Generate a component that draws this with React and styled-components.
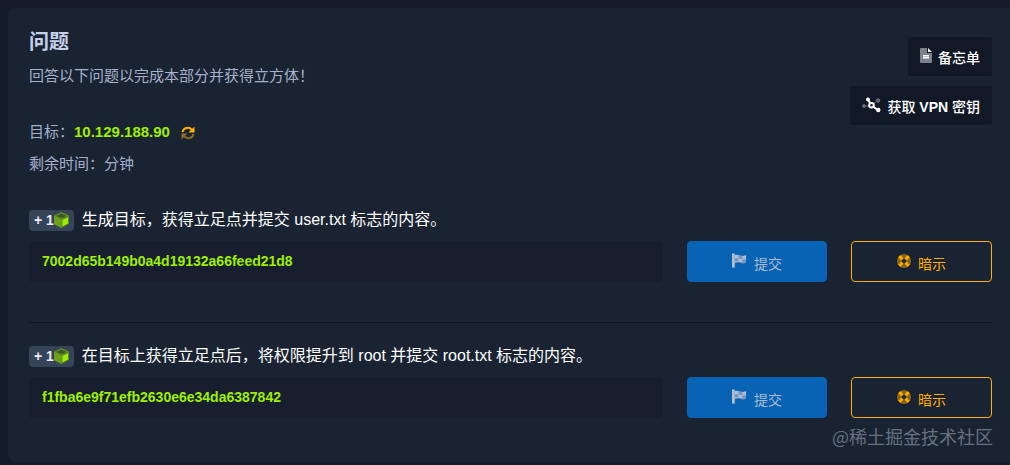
import styled, { createGlobalStyle } from "styled-components";

const GlobalStyle = createGlobalStyle`
  * {
    box-sizing: border-box;
  }
  body {
    margin: 0;
    background-color: #151d2b;
    color: #a4b1cd;
    font-family: "Liberation Sans", "Noto Sans CJK SC", sans-serif;
    font-size: 15px;
  }
  h2, h3, p {
    margin: 0;
  }
`;

const Panel = styled.main`
  position: relative;
  margin: 8px 0 3px 8px;
  padding: 18px 18px 44px 21px;
  background-color: #1a2332;
  border-radius: 8px 0 0 8px;
`;

const Header = styled.header`
  display: flex;
  justify-content: space-between;
  align-items: flex-start;
`;

const Intro = styled.div`
  h2 {
    font-size: 20px;
    line-height: 32px;
    font-weight: 700;
    color: #c5d1eb;
  }
  p {
    line-height: 32px;
  }
`;

const Target = styled.div`
  margin-top: 24px;
  p {
    display: flex;
    align-items: center;
  }
  strong {
    color: #9fef00;
  }
`;

const Lead = styled.p`
  padding-top: 2px;
`;

const RefreshButton = styled.button`
  display: flex;
  margin: 2px 0 0 11px;
  padding: 0;
  border: 0;
  background: none;
`;

const Actions = styled.div`
  display: flex;
  flex-direction: column;
  align-items: flex-end;
  gap: 10px;
  margin-top: 11px;
`;

const DarkButton = styled.button`
  display: flex;
  align-items: center;
  gap: 6px;
  height: 39px;
  padding: 0 12px;
  border: 0;
  border-radius: 2px;
  background-color: #111927;
  color: #ffffff;
  font-family: inherit;
  font-size: 14px;
  font-weight: 500;
  line-height: 20px;
  span {
    padding-top: 3px;
  }
  svg {
    margin-bottom: 2px;
  }
`;

const Question = styled.section`
  padding: ${({ $first }) => ($first ? "28px 0 40px" : "21px 0 0")};
  border-bottom: ${({ $first }) => ($first ? "1px solid #111927" : "0")};
`;

const QuestionTitle = styled.h3`
  display: flex;
  align-items: center;
  gap: 8px;
  font-size: 16px;
  font-weight: 400;
  line-height: 24px;
  color: #ffffff;
`;

const Point = styled.span`
  display: flex;
  align-items: center;
  height: 21px;
  padding: 0 5px;
  border-radius: 4px;
  background-color: #374357;
  color: #e6ebf5;
  font-size: 14px;
  font-weight: 700;
`;

const AnswerRow = styled.form`
  display: grid;
  grid-template-columns: minmax(0, 1fr) 140px 141px;
  column-gap: 24px;
  margin-top: 9px;
`;

const Answer = styled.input`
  min-width: 0;
  height: 41px;
  padding: 0 13px 2px;
  border: 0;
  border-radius: 4px;
  background-color: #171f2e;
  color: #9fef00;
  font-family: inherit;
  font-size: 14px;
  font-weight: 700;
`;

const RowButton = styled.button`
  display: flex;
  justify-content: center;
  align-items: center;
  gap: 7px;
  height: 41px;
  border: 1px solid ${({ $hint }) => ($hint ? "#ffaf00" : "#0863b5")};
  border-radius: 4px;
  background-color: ${({ $hint }) => ($hint ? "transparent" : "#0863b5")};
  color: ${({ $hint }) => ($hint ? "#ffaf00" : "#a9b9cf")};
  font-family: inherit;
  font-size: 14px;
  line-height: 20px;
  span {
    padding-top: 4px;
  }
  svg {
    margin-bottom: 2px;
  }
`;

const Watermark = styled.div`
  position: absolute;
  right: 17px;
  bottom: 13px;
  color: #667080;
  font-family: "Noto Sans CJK SC", sans-serif;
  font-size: 18px;
  line-height: 26px;
`;

const RefreshIcon = () => (
  <svg width="14" height="14" viewBox="0 0 14 14" fill="none" strokeWidth="2">
    <path d="M1.500 6C2.500 1.400 8 .4 11 3.800" stroke="#ffaf00" />
    <path d="M13.500 .6v6H7.500z" fill="#ffaf00" />
    <path d="M12.500 8C11.500 12.600 6 13.600 3 10.200" stroke="#8f6b28" />
    <path d="M.5 13.400v-6h6z" fill="#8f6b28" />
  </svg>
);

const FileIcon = () => (
  <svg width="12" height="15" viewBox="0 0 12 15">
    <path d="M1 0h6v5h5v9a1 1 0 0 1-1 1H1a1 1 0 0 1-1-1V1a1 1 0 0 1 1-1z" fill="#7c828b" />
    <path d="M7 5h1v1H7z" fill="#7c828b" />
    <path d="M8 0l4 4H8zM3 7h6v1.500H3zM3 9h6v1.500H3z" fill="#ffffff" />
  </svg>
);

const NetworkIcon = () => (
  <svg width="19" height="16" viewBox="0 0 19 16">
    <g fill="#626973" stroke="#626973">
      <path d="M2 9h7l6-5" fill="none" />
      <circle cx="2" cy="9" r="1.500" />
      <circle cx="16" cy="3.500" r="1.800" />
    </g>
    <path d="M6 2.500l3.500 6L16 13" stroke="#ffffff" strokeWidth="2" />
    <circle cx="6" cy="2.500" r="2" fill="#ffffff" />
    <circle cx="16.300" cy="13" r="2.200" fill="#ffffff" />
    <circle cx="9.500" cy="8.300" r="2.300" fill="#111927" stroke="#ffffff" strokeWidth="2" />
  </svg>
);

const CubeIcon = () => (
  <svg width="15" height="16" viewBox="0 0 15 16">
    <path d="M7.500 0L15 3.500v8.500L7.500 16 0 12V3.500z" fill="#5c8a22" />
    <path d="M7.500 1.800L12.500 4 7.500 6.200 2.500 4z" fill="#3c5625" />
    <path d="M0 4l7.500 3.200V16L0 12z" fill="#6a9f20" />
    <path d="M8.500 8L14 5.500v6L8.500 14.300z" fill="#9fef00" />
  </svg>
);

const FlagIcon = () => (
  <svg width="15" height="15" viewBox="0 0 16 15">
    <path d="M0 0h3v15H0z" fill="#b3bfd0" />
    <path d="M3 2c4-2 7 2 12 0v8c-5 2-8-2-12 0z" fill="#6e97c6" />
    <path
      d="M3 2c1.500-.6 2.700-.5 4-.1v3.300H3zM7 5.200c1.500.5 3 1 4 .9v3.300c-1.500-.2-2.500-.6-4-.9zM11 2.800c1.500.1 2.500-.2 4-.8v3.500c-1.400.5-2.500.8-4 .6zM3 8.400h4V9c-1.500-.1-2.500.3-4 1z"
      fill="#b3bfd0"
    />
  </svg>
);

const LifeIcon = () => (
  <svg width="14" height="14" viewBox="0 0 14 14">
    <circle cx="7" cy="7" r="4.500" fill="none" stroke="#8a6420" strokeWidth="5" />
    <path
      d="M2.300 2.300l3 3M11.700 2.300l-3 3M2.300 11.700l3-3M11.700 11.700l-3-3"
      stroke="#ffaf00"
      strokeWidth="3"
    />
  </svg>
);

const questions = [
  {
    id: "user",
    title: "生成目标，获得立足点并提交 user.txt 标志的内容。",
    answer: "7002d65b149b0a4d19132a66feed21d8",
  },
  {
    id: "root",
    title: "在目标上获得立足点后，将权限提升到 root 并提交 root.txt 标志的内容。",
    answer: "f1fba6e9f71efb2630e6e34da6387842",
  },
];

export default function App() {
  return (
    <>
      <GlobalStyle />
      <Panel lang="zh-CN">
        <Header>
          <Intro>
            <h2>问题</h2>
            <Lead>回答以下问题以完成本部分并获得立方体！</Lead>
            <Target>
              <p>
                目标：<strong>10.129.188.90</strong>
                <RefreshButton type="button" aria-label="刷新">
                  <RefreshIcon />
                </RefreshButton>
              </p>
              <p>剩余时间：分钟</p>
            </Target>
          </Intro>
          <Actions>
            <DarkButton type="button">
              <FileIcon />
              <span>备忘单</span>
            </DarkButton>
            <DarkButton type="button">
              <NetworkIcon />
              <span>
                获取 <b>VPN</b> 密钥
              </span>
            </DarkButton>
          </Actions>
        </Header>

        {questions.map((question, index) => (
          <Question key={question.id} $first={index === 0}>
            <QuestionTitle id={question.id}>
              <Point>
                + 1<CubeIcon />
              </Point>
              {question.title}
            </QuestionTitle>
            <AnswerRow onSubmit={(e) => e.preventDefault()}>
              <Answer
                type="text"
                aria-labelledby={question.id}
                defaultValue={question.answer}
              />
              <RowButton type="submit">
                <FlagIcon />
                <span>提交</span>
              </RowButton>
              <RowButton type="button" $hint>
                <LifeIcon />
                <span>暗示</span>
              </RowButton>
            </AnswerRow>
          </Question>
        ))}
        <Watermark>@稀土掘金技术社区</Watermark>
      </Panel>
    </>
  );
}
